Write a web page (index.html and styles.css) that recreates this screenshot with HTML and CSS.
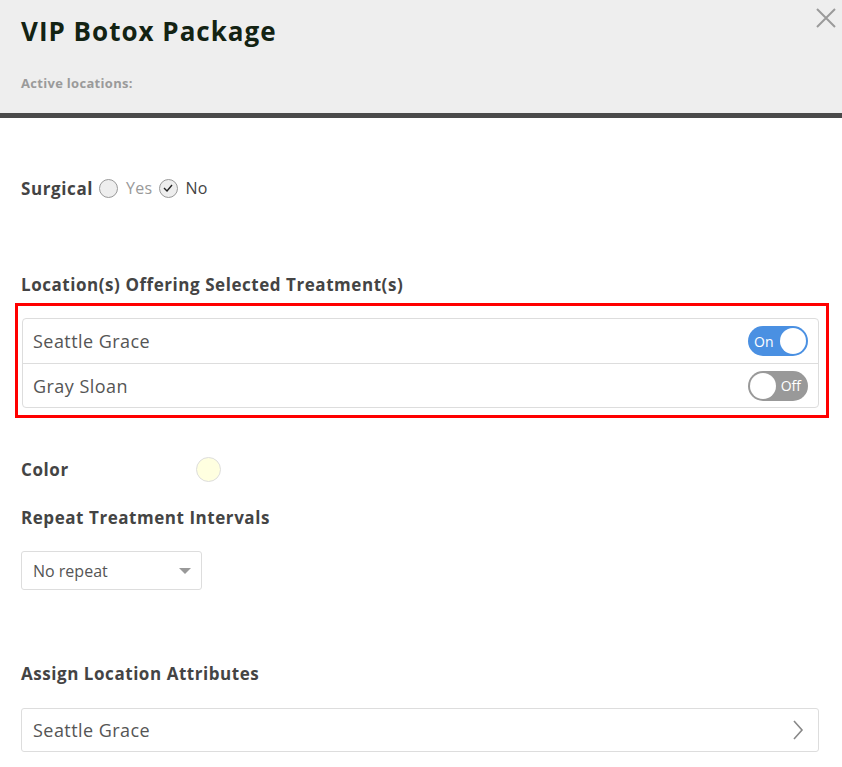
FILE: index.html
```html
<!DOCTYPE html>
<html lang="en">

<head>
  <meta charset="UTF-8">
  <meta name="viewport" content="width=device-width, initial-scale=1">
  <title>VIP Botox Package</title>
  <link rel="stylesheet" href="styles.css">
</head>

<body>

  <div class="modal-header">
    <h1 class="title">VIP Botox Package</h1>
    <div class="active-locations">Active locations:</div>
    <button class="close-btn" aria-label="Close">
      <svg width="22" height="22" viewBox="0 0 22 22">
        <path d="M2 2 L20 20 M20 2 L2 20" stroke="#9a9a9a" stroke-width="2" fill="none" />
      </svg>
    </button>
  </div>

  <div class="modal-body">

    <div class="surgical">
      <span class="label">Surgical</span>
      <span class="radio"></span>
      <span class="radio-text muted">Yes</span>
      <span class="radio checked">
        <svg width="10" height="8" viewBox="0 0 10 8">
          <path d="M1 4 L4 7 L9 1" stroke="#222" stroke-width="1.4" fill="none" />
        </svg>
      </span>
      <span class="radio-text">No</span>
    </div>

    <h2 class="section-title">Location(s) Offering Selected Treatment(s)</h2>
    <div class="highlight">
      <div class="loc-list">
        <div class="loc-row">
          <span>Seattle Grace</span>
          <span class="toggle on"><span class="toggle-text">On</span><span class="knob"></span></span>
        </div>
        <div class="loc-row">
          <span>Gray Sloan</span>
          <span class="toggle off"><span class="knob"></span><span class="toggle-text">Off</span></span>
        </div>
      </div>
    </div>

    <div class="color-row">
      <span class="label">Color</span>
      <span class="swatch"></span>
    </div>

    <h2 class="section-title repeat-title">Repeat Treatment Intervals</h2>
    <div class="select">
      <span>No repeat</span>
      <span class="caret"></span>
    </div>

    <h2 class="section-title attr-title">Assign Location Attributes</h2>
    <div class="attr-box">
      <span>Seattle Grace</span>
      <svg width="12" height="20" viewBox="0 0 12 20">
        <path d="M2 1 L10 10 L2 19" stroke="#888" stroke-width="1.6" fill="none" />
      </svg>
    </div>

  </div>

</body>

</html>
```

FILE: styles.css
```css
* {
  margin: 0;
  padding: 0;
  box-sizing: border-box;
}

body {
  background: #fff;
  color: #444;
  font-family: 'Open Sans', 'Liberation Sans', sans-serif;
  width: 842px;
}

.modal-header {
  position: relative;
  background: #eeeeee;
  border-bottom: 5px solid #4a4a4a;
  height: 118px;
  padding: 14px 21px 0;
}

.title {
  font-size: 26px;
  font-weight: 700;
  color: #132313;
  letter-spacing: 1px;
  line-height: 34px;
}

.active-locations {
  margin-top: 26px;
  font-size: 13px;
  font-weight: 700;
  color: #9a9a9a;
  letter-spacing: 0.3px;
}

.close-btn {
  position: absolute;
  top: 7px;
  right: 5px;
  background: none;
  border: none;
  cursor: pointer;
}

.modal-body {
  padding: 0 23px 0 21px;
}

.label {
  font-size: 17px;
  font-weight: 700;
  color: #444;
  letter-spacing: 0.6px;
}

.surgical {
  display: flex;
  align-items: center;
  margin-top: 57px;
  height: 26px;
}

.surgical .label {
  margin-right: 6px;
}

.radio {
  width: 19px;
  height: 19px;
  border-radius: 50%;
  border: 1px solid #999;
  background: #eee;
  display: flex;
  align-items: center;
  justify-content: center;
}

.radio-text {
  font-size: 16px;
  color: #444;
  margin: 0 6px 0 8px;
  letter-spacing: 0.3px;
}

.radio-text.muted {
  color: #999;
}

.section-title {
  font-size: 17px;
  font-weight: 700;
  color: #444;
  margin-top: 72px;
  line-height: 24px;
  letter-spacing: 0.55px;
}

.highlight {
  margin: 6px -10px 0 -6px;
  border: 3px solid #ff0000;
  padding: 12px 7px 7px 4px;
}

.loc-list {
  border: 1px solid #ddd;
  border-radius: 4px;
}

.loc-row {
  display: flex;
  align-items: center;
  justify-content: space-between;
  height: 44px;
  padding: 0 10px 0 10px;
  font-size: 18px;
  color: #555;
  letter-spacing: 0.45px;
}

.loc-row + .loc-row {
  border-top: 1px solid #ddd;
}

.toggle {
  width: 60px;
  height: 30px;
  border-radius: 15px;
  display: flex;
  align-items: center;
  padding: 0 2px;
  color: #fff;
  font-size: 14px;
  letter-spacing: 0;
}

.toggle.on {
  background: #4a90e2;
  justify-content: space-between;
  padding-left: 6px;
}

.toggle.off {
  background: #999;
  justify-content: space-between;
  padding-right: 7px;
}

.knob {
  width: 26px;
  height: 26px;
  border-radius: 50%;
  background: #fff;
}

.color-row {
  display: flex;
  align-items: center;
  margin-top: 38px;
  height: 26px;
}

.swatch {
  width: 25px;
  height: 25px;
  border-radius: 50%;
  background: #ffffe0;
  border: 1px solid #ddd;
  margin-left: 127px;
}

.repeat-title {
  margin-top: 24px;
}

.select {
  display: flex;
  align-items: center;
  justify-content: space-between;
  width: 181px;
  height: 39px;
  margin-top: 21px;
  border: 1px solid #ddd;
  border-radius: 3px;
  padding: 0 10px 0 11px;
  font-size: 16px;
  color: #555;
}

.caret {
  width: 0;
  height: 0;
  border-left: 6px solid transparent;
  border-right: 6px solid transparent;
  border-top: 6px solid #999;
}

.attr-title {
  margin-top: 72px;
}

.attr-box {
  display: flex;
  align-items: center;
  justify-content: space-between;
  height: 44px;
  margin-top: 22px;
  border: 1px solid #ddd;
  border-radius: 3px;
  padding: 0 14px 0 11px;
  font-size: 18px;
  color: #555;
  letter-spacing: 0.45px;
}
```
